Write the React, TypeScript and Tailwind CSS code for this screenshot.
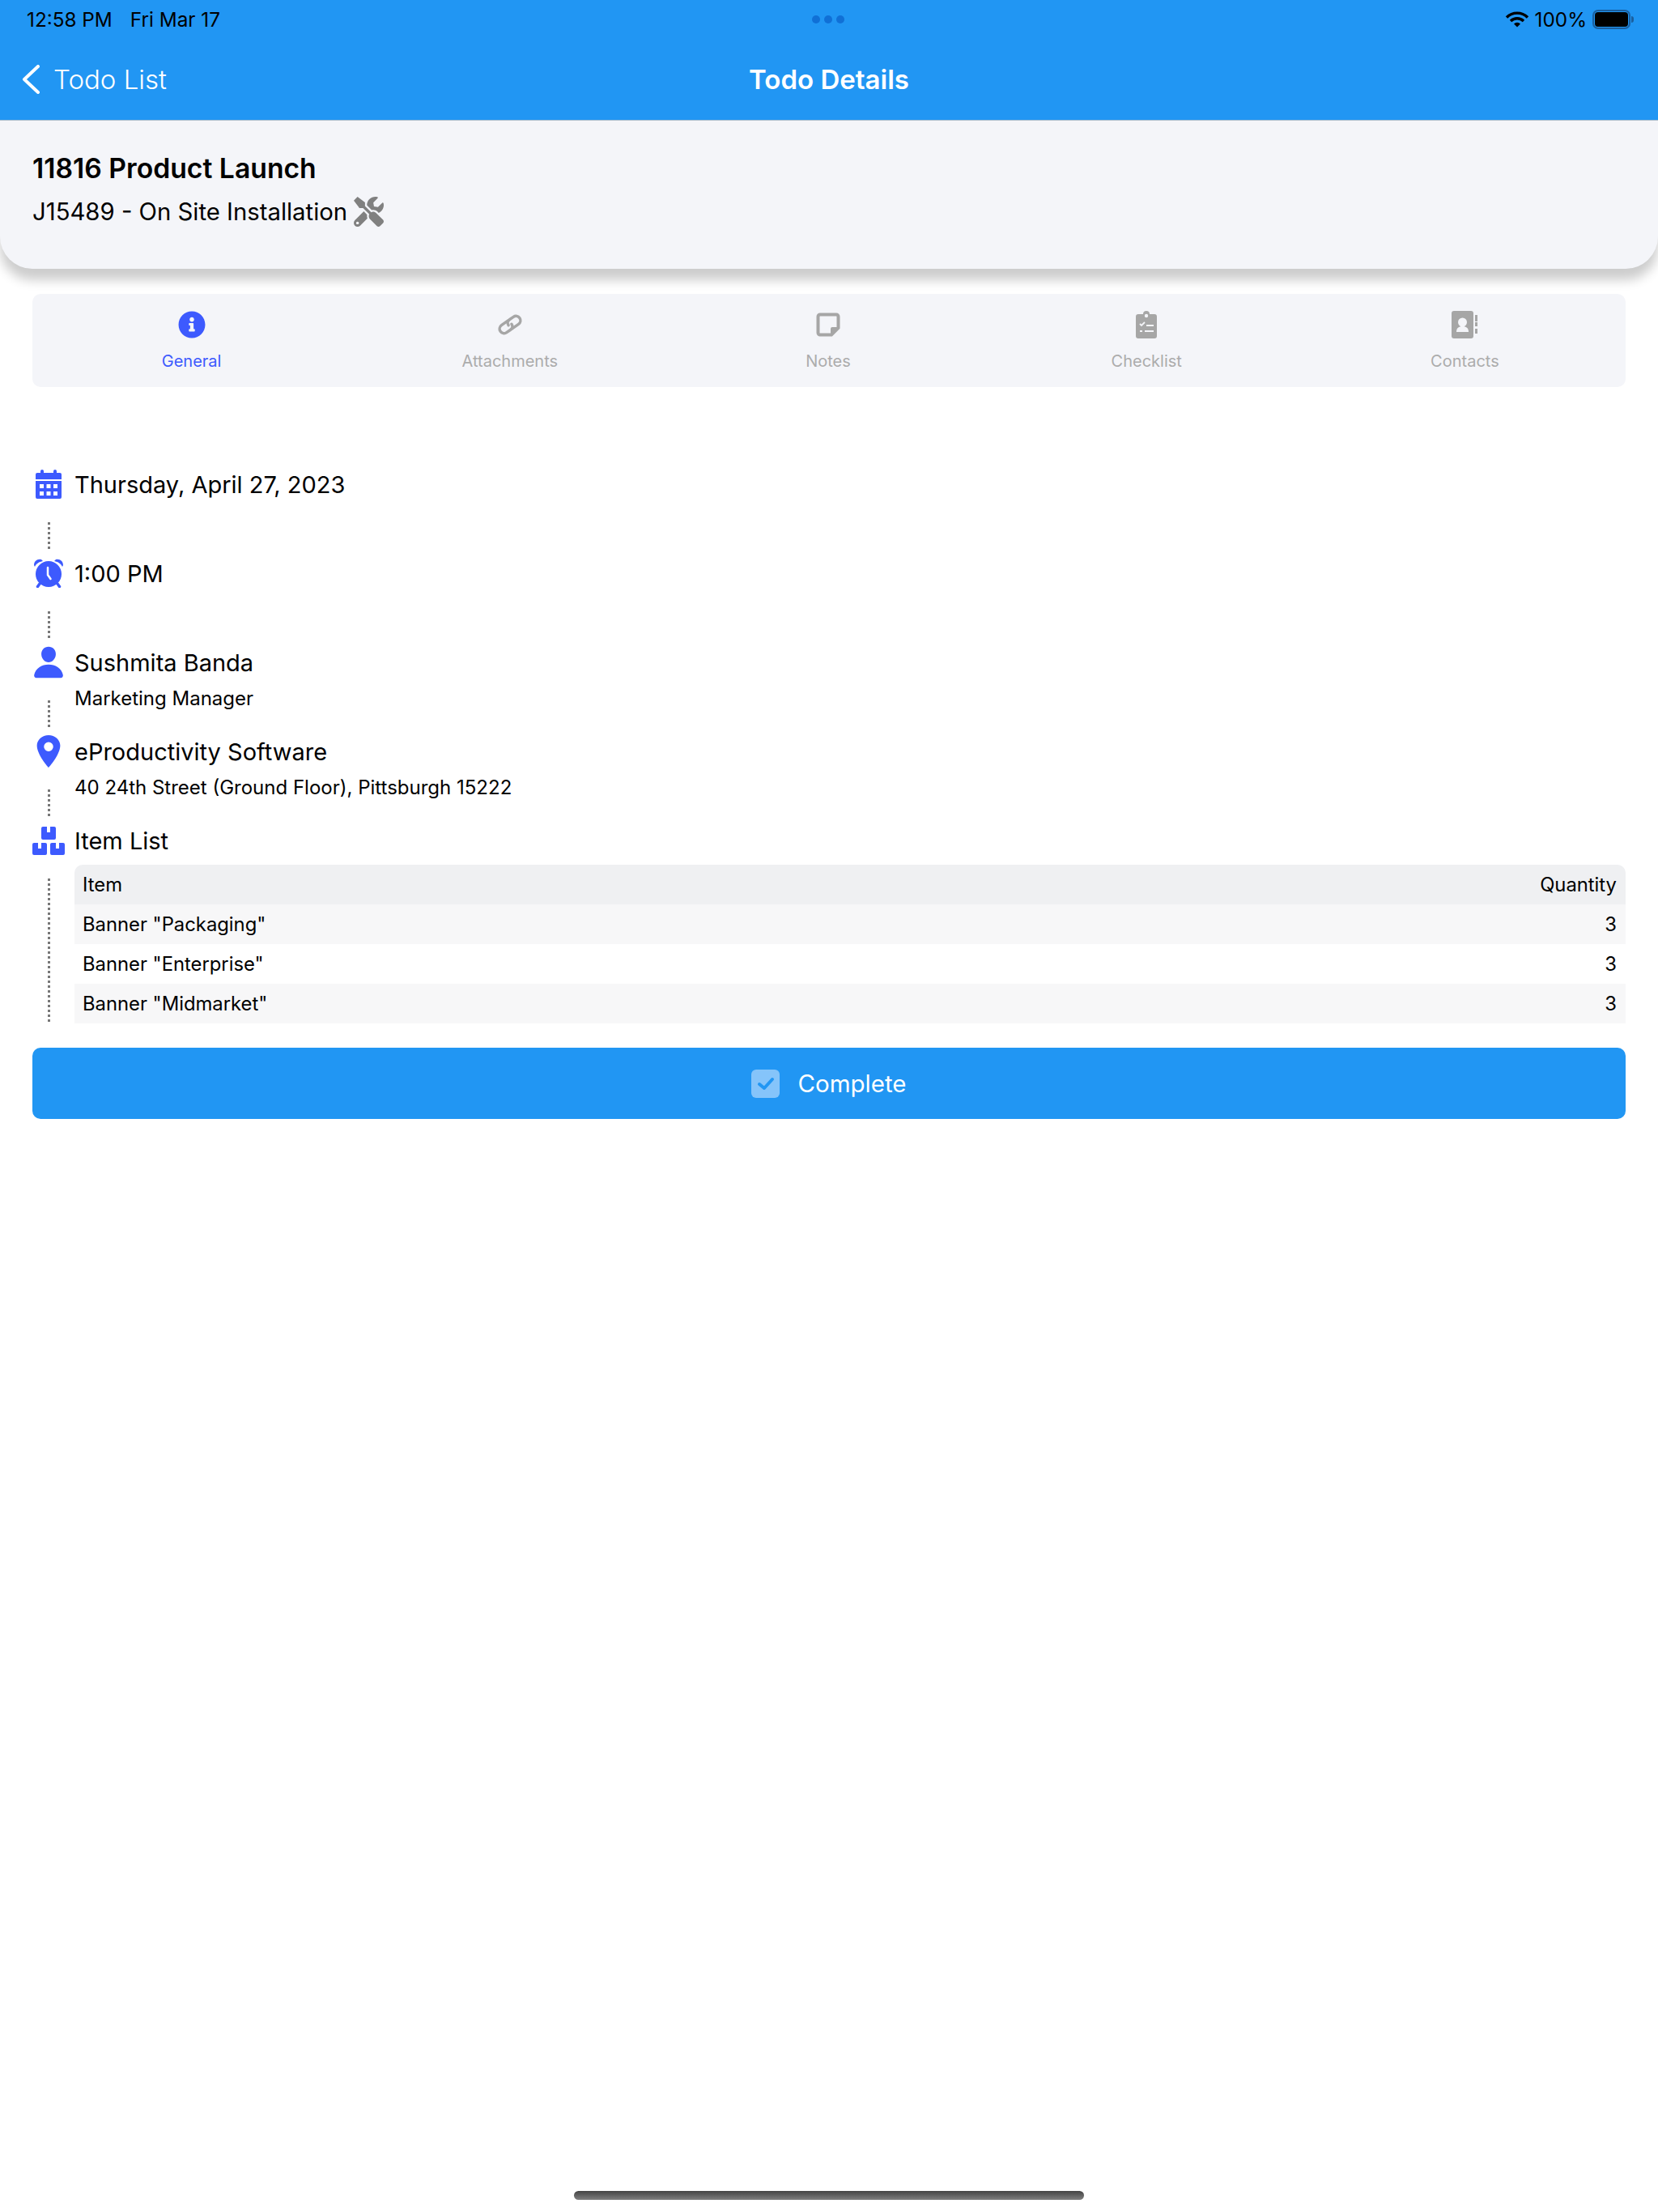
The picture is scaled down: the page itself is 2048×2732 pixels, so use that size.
import { FaInfoCircle, FaTools } from 'react-icons/fa';
import { IoPerson, IoLocationSharp } from 'react-icons/io5';

const CalendarIcon = () => (
  <svg viewBox="0 0 32 36" className="w-[32px] h-[36px] fill-[#3d5afe]">
    <rect x="6" y="0" width="4" height="7" rx="2" />
    <rect x="22" y="0" width="4" height="7" rx="2" />
    <path d="M2 4h28a2 2 0 0 1 2 2v6H0V6a2 2 0 0 1 2-2z" />
    <path
      fillRule="evenodd"
      d="M0 14h32v20a2 2 0 0 1-2 2H2a2 2 0 0 1-2-2zM5 18v5h5v-5zM13.500 18v5h5v-5zM22 18v5h5v-5zM5 27v5h5v-5zM13.500 27v5h5v-5zM22 27v5h5v-5z"
    />
  </svg>
);

const AlarmIcon = () => (
  <svg viewBox="0 0 36 36" className="w-[36px] h-[36px] fill-[#3d5afe]">
    <circle cx="18" cy="19" r="16" />
    <path d="M0 8C0 3 4 0 9 1l2 2C6 4 3 6 1 10z" />
    <path d="M36 8c0-5-4-8-9-7l-2 2c5 1 8 3 10 7z" />
    <path d="M7 31l-2.500 3.500M29 31l2.500 3.500" fill="none" stroke="#3d5afe" strokeWidth="3.500" strokeLinecap="round" />
    <path d="M17 11v9l3.500 5" fill="none" stroke="#fff" strokeWidth="2.500" strokeLinecap="round" />
  </svg>
);

const BoxesIcon = () => (
  <svg viewBox="0 0 40 36" className="w-[40px] h-[36px] fill-[#3d5afe]">
    <path
      fillRule="evenodd"
      d="M13 1h14a2 2 0 0 1 2 2v12a2 2 0 0 1-2 2H13a2 2 0 0 1-2-2V3a2 2 0 0 1 2-2zM18 1v7h4V1z"
    />
    <path
      fillRule="evenodd"
      d="M2 21h14a2 2 0 0 1 2 2v11a2 2 0 0 1-2 2H2a2 2 0 0 1-2-2V23a2 2 0 0 1 2-2zM7 21v7h4v-7z"
    />
    <path
      fillRule="evenodd"
      d="M24 21h14a2 2 0 0 1 2 2v11a2 2 0 0 1-2 2H24a2 2 0 0 1-2-2V23a2 2 0 0 1 2-2zM29 21v7h4v-7z"
    />
  </svg>
);

const LinkIcon = () => (
  <svg viewBox="0 0 34 26" className="w-[34px] h-[26px]" fill="none" stroke="#a6a6a6" strokeWidth="3.500" strokeLinecap="round">
    <g transform="rotate(-35 17 13)">
      <path d="M18 7.500H8a5.500 5.500 0 0 0 0 11h6a5 5 0 0 0 5-5" />
      <path d="M16 18.500h10a5.500 5.500 0 0 0 0-11h-6a5 5 0 0 0-5 5" />
    </g>
  </svg>
);

const NoteIcon = () => (
  <svg viewBox="0 0 30 30" className="w-[30px] h-[30px]">
    <path
      d="M5 2.500h20a2.500 2.500 0 0 1 2.500 2.500v14L19 27.500H5A2.500 2.500 0 0 1 2.500 25V5A2.500 2.500 0 0 1 5 2.500z"
      fill="none"
      stroke="#a6a6a6"
      strokeWidth="4"
    />
    <path d="M18 28v-8a2 2 0 0 1 2-2h8z" fill="#a6a6a6" />
  </svg>
);

const ClipboardIcon = () => (
  <svg viewBox="0 0 26 34" className="w-[26px] h-[34px]">
    <path
      fill="#a6a6a6"
      d="M9 4a4 4 0 0 1 8 0h6a3 3 0 0 1 3 3v24a3 3 0 0 1-3 3H3a3 3 0 0 1-3-3V7a3 3 0 0 1 3-3z"
    />
    <circle cx="13" cy="6" r="2.200" fill="#f4f5f9" />
    <path d="M5 16l2 2 4-4" fill="none" stroke="#f4f5f9" strokeWidth="1.800" />
    <rect x="13" y="17" width="9" height="2" fill="#f4f5f9" />
    <rect x="5" y="24" width="3" height="2" fill="#f4f5f9" />
    <rect x="11" y="24" width="11" height="2" fill="#f4f5f9" />
  </svg>
);

const ContactsIcon = () => (
  <svg viewBox="0 0 32 34" className="w-[32px] h-[34px]">
    <rect x="0" y="0" width="27" height="34" rx="3" fill="#a6a6a6" />
    <circle cx="13.500" cy="14" r="5.500" fill="#f4f5f9" />
    <path d="M6 26c0-5 3-7 7.500-7s7.500 2 7.500 7z" fill="#f4f5f9" />
    <rect x="29" y="5" width="3" height="8" fill="#a6a6a6" />
    <rect x="29" y="14" width="3" height="5" fill="#a6a6a6" />
    <rect x="29" y="22" width="3" height="6" fill="#a6a6a6" />
  </svg>
);

const WifiIcon = () => (
  <svg viewBox="0 0 30 20" className="w-[30px] h-[20px]" fill="none" stroke="#000" strokeWidth="3.400">
    <path d="M2 7.500a18.500 18.500 0 0 1 26 0" />
    <path d="M7 12a11.500 11.500 0 0 1 16 0" />
    <path d="M15 19.500l-4-4a5.700 5.700 0 0 1 8 0z" fill="#000" stroke="none" />
  </svg>
);

const Dots = ({ className }: { className: string }) => (
  <div
    className={`w-[3px] bg-[repeating-linear-gradient(to_bottom,#777_0,#777_3px,transparent_3px,transparent_6px)] ${className}`}
  />
);

const tabs = [
  { label: 'General', icon: <FaInfoCircle className="w-[34px] h-[34px] text-[#3d5afe]" />, active: true },
  { label: 'Attachments', icon: <LinkIcon />, active: false },
  { label: 'Notes', icon: <NoteIcon />, active: false },
  { label: 'Checklist', icon: <ClipboardIcon />, active: false },
  { label: 'Contacts', icon: <ContactsIcon />, active: false },
];

const steps = [
  { icon: <CalendarIcon />, title: 'Thursday, April 27, 2023' },
  { icon: <AlarmIcon />, title: '1:00 PM' },
  { icon: <IoPerson className="shrink-0 w-[44px] h-[44px] text-[#3d5afe]" />, title: 'Sushmita Banda', sub: 'Marketing Manager' },
  {
    icon: <IoLocationSharp className="shrink-0 w-[46px] h-[46px] text-[#3d5afe]" />,
    title: 'eProductivity Software',
    sub: '40 24th Street (Ground Floor), Pittsburgh 15222',
  },
];

const items = ['Banner "Packaging"', 'Banner "Enterprise"', 'Banner "Midmarket"'];

export default function App() {
  return (
    <div className="flex flex-col h-[2732px] bg-white text-black font-['Inter',sans-serif]">
      {/* Status + nav bar */}
      <header className="bg-[#2196f3] h-[149px] border-b border-[#a9bccb]">
        <div className="relative flex items-center justify-between h-[48px] pl-[33px] pr-[30px] text-[24.300px]">
          <div className="flex gap-[22px]">
            <span>12:58 PM</span>
            <span>Fri Mar 17</span>
          </div>
          <div className="absolute left-[1003px] top-[19px] flex gap-[5px]">
            <div className="w-[10px] h-[10px] rounded-full bg-[#1070d6]" />
            <div className="w-[10px] h-[10px] rounded-full bg-[#1070d6]" />
            <div className="w-[10px] h-[10px] rounded-full bg-[#1070d6]" />
          </div>
          <div className="flex items-center gap-[7px]">
            <WifiIcon />
            <span>100%</span>
            <div className="flex items-center gap-[1px]">
              <div className="w-[47px] h-[24px] rounded-[7px] border-2 border-[#1a5f9f] p-[1px]">
                <div className="w-full h-full rounded-[4px] bg-black" />
              </div>
              <div className="w-[3px] h-[8px] rounded-r-full bg-[#1a5f9f]" />
            </div>
          </div>
        </div>
        <div className="relative flex items-center justify-center h-[100px] pt-[2px] text-white">
          <div className="absolute left-[27px] top-[30px] flex items-center gap-[17px] text-[33px] leading-[40px] font-light">
            <svg viewBox="0 0 22 36" className="w-[22px] h-[36px]" fill="none" stroke="#fff" strokeWidth="4" strokeLinecap="round" strokeLinejoin="round">
              <path d="M20 2L3 18l17 16" />
            </svg>
            <span>Todo List</span>
          </div>
          <h1 className="text-[33px] font-semibold">Todo Details</h1>
        </div>
      </header>

      {/* Title card */}
      <section className="relative z-10 h-[183px] px-[40px] pt-[39px] bg-[#f4f5f9] rounded-b-[40px] shadow-[0_14px_14px_rgba(0,0,0,0.2)]">
        <div className="text-[33.700px] leading-[40px] font-semibold">11816 Product Launch</div>
        <div className="flex items-center gap-[8px] mt-[15px] text-[29.300px] leading-[36px]">
          <span>J15489 - On Site Installation</span>
          <FaTools className="w-[37px] h-[37px] text-[#808080]" />
        </div>
      </section>

      <main className="px-[40px]">
        {/* Tabs */}
        <nav className="flex h-[115px] mt-[31px] pr-[2px] rounded-[10px] bg-[#f4f5f9]">
          {tabs.map(tab => (
            <div key={tab.label} className="flex-1 flex flex-col items-center pt-[21px]">
              <div className="flex items-center justify-center h-[34px]">{tab.icon}</div>
              <span className={`mt-[16px] text-[20px] leading-[24px] ${tab.active ? 'text-[#3d5afe]' : 'text-[#acacac]'}`}>
                {tab.label}
              </span>
            </div>
          ))}
        </nav>

        {/* Timeline */}
        <div className="mt-[102px]">
          {steps.map(step => (
            <div key={step.title} className="flex gap-[12px]">
              <div className="flex flex-col items-center w-[40px] pb-[12px]">
                <div className="flex items-center justify-center h-[36px]">{step.icon}</div>
                <Dots className="h-[33px] mt-[29px]" />
              </div>
              <div>
                <div className="text-[29px] leading-[38px]">{step.title}</div>
                {step.sub && <div className="mt-[10px] text-[24px] leading-[30px]">{step.sub}</div>}
              </div>
            </div>
          ))}

          <div className="flex gap-[12px]">
            <div className="flex flex-col items-center w-[40px]">
              <div className="flex items-center justify-center h-[36px]">
                <BoxesIcon />
              </div>
              <Dots className="h-[177px] mt-[29px]" />
            </div>
            <div className="flex-1">
              <div className="text-[29px] leading-[38px]">Item List</div>
              <div className="mt-[10px] rounded-t-[10px] overflow-hidden text-[23.800px]">
                <div className="flex items-center justify-between h-[49px] pl-[10px] pr-[11px] bg-[#eff0f2]">
                  <span>Item</span>
                  <span>Quantity</span>
                </div>
                {items.map((item, i) => (
                  <div
                    key={item}
                    className={`flex items-center justify-between h-[49px] pl-[10px] pr-[11px] ${i % 2 === 0 ? 'bg-[#f7f7f8]' : 'bg-white'}`}
                  >
                    <span>{item}</span>
                    <span>3</span>
                  </div>
                ))}
              </div>
            </div>
          </div>
        </div>

        {/* Complete */}
        <button className="flex items-center justify-center gap-[22px] w-full h-[88px] mt-[30px] rounded-[10px] bg-[#2196f3] text-white text-[29.500px]">
          <span className="flex items-center justify-center w-[35px] h-[35px] rounded-[6px] bg-[#85c4fa]">
            <svg viewBox="0 0 24 24" className="w-[24px] h-[24px]" fill="none" stroke="#2196f3" strokeWidth="4" strokeLinecap="round" strokeLinejoin="round">
              <path d="M4 13l6 5L20 7" />
            </svg>
          </span>
          Complete
        </button>
      </main>

      {/* Home indicator */}
      <div className="mt-auto mb-[15px] mx-auto w-[630px] h-[11px] rounded-[6px] bg-gradient-to-b from-[#444444] to-[#808080]" />
    </div>
  );
}
